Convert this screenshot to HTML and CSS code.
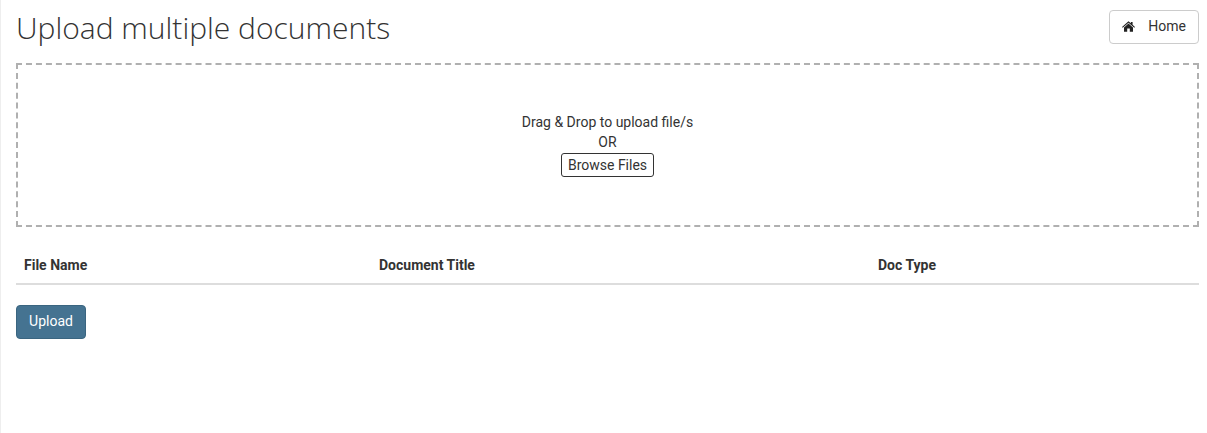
FILE: index.html
```html
<!DOCTYPE html>
<html lang="en">
<head>
    <meta charset="UTF-8">
    <meta name="viewport" content="width=device-width, initial-scale=1.0">
    <title>Upload multiple documents</title>
    <link rel="stylesheet" href="styles.css">
</head>
<body>
    <div class="page">
        <div class="page-header">
            <h1>Upload multiple documents</h1>
            <a class="home-btn" href="#">
                <svg class="home-icon" viewBox="0 0 13 11" width="13" height="11" aria-hidden="true">
                    <path d="M6.5 0.2 L8.9 2.3 V1 H10.6 V3.8 L13 5.9 L12.3 6.7 L6.5 1.7 L0.7 6.7 L0 5.9 Z"/>
                    <path d="M6.5 2.6 L11 6.4 V10.8 H7.8 V7.6 H5.2 V10.8 H2 V6.4 Z"/>
                </svg>
                <span>Home</span>
            </a>
        </div>

        <div class="drop-zone">
            <div>Drag &amp; Drop to upload file/s</div>
            <div>OR</div>
            <button class="browse-btn" type="button">Browse Files</button>
        </div>

        <table class="file-table">
            <thead>
                <tr>
                    <th class="col-name">File Name</th>
                    <th class="col-title">Document Title</th>
                    <th>Doc Type</th>
                </tr>
            </thead>
        </table>

        <button class="upload-btn" type="button">Upload</button>
    </div>
</body>
</html>
```

FILE: styles.css
```css
html, body {
    height: 100%;
}
body {
    font-family: 'Roboto', sans-serif;
    font-size: 14px;
    line-height: 20px;
    color: #333;
    background-color: #fff;
    margin: 0;
    overflow: hidden;
}
.page {
    height: 100%;
    box-sizing: border-box;
    border-left: 1px solid #eee;
    padding: 10px 8px 0 15px;
}
.page-header {
    display: flex;
    justify-content: space-between;
    align-items: flex-start;
}
h1 {
    font-family: 'Open Sans', sans-serif;
    font-weight: 300;
    font-size: 30px;
    line-height: 36px;
    color: #333;
    margin: 0;
}
.home-btn {
    display: flex;
    align-items: center;
    gap: 13px;
    height: 34px;
    box-sizing: border-box;
    padding: 0 12px 2px;
    border: 1px solid #ccc;
    border-radius: 4px;
    color: #333;
    text-decoration: none;
}
.home-icon {
    fill: #222;
}
.drop-zone {
    height: 164px;
    box-sizing: border-box;
    margin-top: 17px;
    padding-bottom: 1px;
    border: 2px dashed #b0b0b0;
    display: flex;
    flex-direction: column;
    align-items: center;
    justify-content: center;
}
.browse-btn {
    font-family: 'Roboto', sans-serif;
    font-size: 14px;
    line-height: 20px;
    color: #333;
    background-color: #fff;
    border: 1px solid #333;
    border-radius: 3px;
    margin-top: 1px;
    padding: 1px 6px;
}
.file-table {
    width: 100%;
    table-layout: fixed;
    border-collapse: collapse;
    margin-top: 20px;
}
.file-table th {
    text-align: left;
    font-weight: 700;
    padding: 8px;
    border-bottom: 2px solid #ddd;
}
.col-name {
    width: 339px;
}
.col-title {
    width: 483px;
}
.upload-btn {
    display: block;
    margin-top: 20px;
    width: 70px;
    height: 34px;
    font-family: 'Roboto', sans-serif;
    font-size: 14px;
    color: #fff;
    background-color: #457391;
    border: 1px solid #3a6580;
    border-radius: 4px;
    padding: 0 0 2px;
}
```
